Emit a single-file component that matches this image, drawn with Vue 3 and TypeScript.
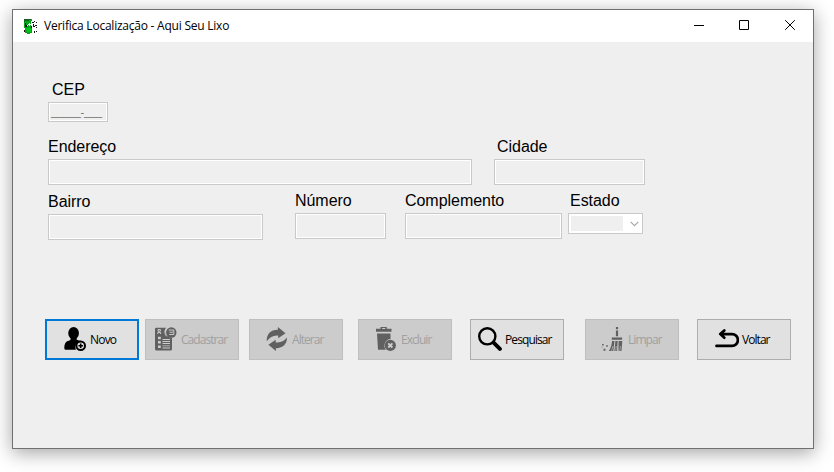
<script setup lang="ts">
import { ref } from 'vue'

interface Action {
  id: string
  label: string
  disabled?: boolean
}

const actions: Action[] = [
  { id: 'novo', label: 'Novo' },
  { id: 'cadastrar', label: 'Cadastrar', disabled: true },
  { id: 'alterar', label: 'Alterar', disabled: true },
  { id: 'excluir', label: 'Excluir', disabled: true },
  { id: 'pesquisar', label: 'Pesquisar' },
  { id: 'limpar', label: 'Limpar', disabled: true },
  { id: 'voltar', label: 'Voltar' },
]

const focused = ref('novo')
</script>

<template>
  <main class="desktop">
    <section class="window">
      <header class="titlebar">
        <svg class="app-icon" viewBox="0 0 14 15" shape-rendering="crispEdges">
          <path d="M0 0h8v2h-1v6h1v6H6v1H3v-1H1V9H0z" fill="#08a51c" />
          <path d="M0 0h7v1H5v1H1v1H0z" fill="#12631b" />
          <path d="M2 9h5v4H3z" fill="#05c61a" />
          <path d="M1 4h1v2h1v2H1zM8 3h2v1H8zM10 2h1v1h-1zM12 3h1v1h-1zM9 5h1v2h1v1H9zM11 6h2v1h-2zM12 8h1v1h-1zM7 7h1v2H7zM10 12h1v2h-1zM12 12h1v1h-1zM0 11h1v2H0z" fill="#111" />
          <path d="M3 6h1v1H3zM4 5h1v1H4zM5 4h1v3H5zM6 5h1v1H6z" fill="#d9f3dc" />
        </svg>
        <h1 class="title">Verifica Localização - Aqui Seu Lixo</h1>
        <div class="controls">
          <svg viewBox="0 0 46 32"><path d="M21 15.5h10" /></svg>
          <svg viewBox="0 0 46 32"><path d="M20.5 10.5h9v9h-9z" /></svg>
          <svg viewBox="0 0 46 32"><path d="M20.2 10.2l9.6 9.6M29.8 10.2l-9.6 9.6" /></svg>
        </div>
      </header>

      <form class="form" @submit.prevent>
        <div class="row row-cep">
          <label class="field cep"><span>CEP</span><span class="box mask">_____-___</span></label>
        </div>
        <div class="row row-street">
          <label class="field endereco"><span>Endereço</span><span class="box"></span></label>
          <label class="field cidade"><span>Cidade</span><span class="box"></span></label>
        </div>
        <div class="row row-details">
          <label class="field bairro"><span>Bairro</span><span class="box"></span></label>
          <label class="field numero"><span>Número</span><span class="box"></span></label>
          <label class="field complemento"><span>Complemento</span><span class="box"></span></label>
          <label class="field estado">
            <span>Estado</span>
            <span class="box select">
              <span class="value"></span>
              <svg viewBox="0 0 9 6"><path d="M.7.8l3.8 3.8L8.3.8" /></svg>
            </span>
          </label>
        </div>

        <div class="actions">
          <button
            v-for="action in actions"
            :key="action.id"
            type="button"
            class="action"
            :class="[action.id, { focused: focused === action.id }]"
            :disabled="action.disabled"
          >
            <svg class="icon" viewBox="0 0 24 24">
              <template v-if="action.id === 'novo'">
                <ellipse cx="9.6" cy="6.2" rx="5.3" ry="6.2" />
                <path d="M6.5 10.5h6.2v2.2l4 1.400a6 6 0 0 0-4.800 8.600H1.800Q.3 22.700.3 21.200C.4 16.500 1.500 14.700 4 13.900l2.500-1z" />
                <circle cx="16.700" cy="18.700" r="4.300" fill="none" stroke="currentColor" stroke-width="2" />
                <path d="M15.900 16.400h1.600v1.500H19v1.600h-1.500V21h-1.600v-1.500h-1.500v-1.600h1.500z" />
              </template>
              <template v-else-if="action.id === 'cadastrar'">
                <path fill-rule="evenodd" d="M2 .8h10.200a6.200 6.200 0 0 0 5.800 9.700V22a1.500 1.500 0 0 1-1.500 1.500H2.500A1.500 1.500 0 0 1 1 22V1.800a1 1 0 0 1 1-1zM4 9.800v2.400h2.800V9.800zM4 14v2.500h2.800V14zM4 18.400v2.500h2.800v-2.500zM8.500 12v.9h7.500V12zM8.500 14v.9h7.500V14zM8.500 16.100v.9h7.500v-.9zM8.500 18.400v.9h7.500v-.9zM8.500 20.600v.9h7.500v-.9z" />
                <path d="M3.800 7V5.500h2.800V7M4 2.600h2.400v1.600H4z" fill="none" stroke="#ccc" stroke-width="1" />
                <path d="M12.300 1.200q-3 4 .2 8" fill="none" stroke="#ccc" stroke-width="1" />
                <circle cx="17.300" cy="5.500" r="5.200" />
                <path d="M14.800 3h5v4.500h-4.500M15.500 5.200h3.500" fill="none" stroke="#ccc" stroke-width="1" />
              </template>
              <template v-else-if="action.id === 'alterar'">
                <path d="M1.800 14.200C1.300 7 6 2.600 12.900 2.800V0l7.600 6.300-7.300 4.900V8.600C8.300 8.100 5 10.200 1.800 14.200z" />
                <path d="M21.900 10.600C22.400 17 17.500 21.400 10.900 21.200V24l-7.500-6.300 7.300-4.900v2.600c4.900.5 8.200-.9 11.200-4.800z" />
              </template>
              <template v-else-if="action.id === 'excluir'">
                <path fill-rule="evenodd" d="M6.500 1.800V0h6.300v1.800h4.700v3H2v-3zM8.200 1.100v.8h3v-.8z" />
                <path d="M3 6.500h13.500v5.600a6.600 6.600 0 0 0-4.700 10.600H4z" />
                <circle cx="16.300" cy="18.400" r="5.600" />
                <path d="M14.200 16.300l4.200 4.200M18.400 16.300l-4.200 4.200" stroke="#ccc" stroke-width="1.900" />
              </template>
              <template v-else-if="action.id === 'pesquisar'">
                <circle cx="9.300" cy="9.300" r="8.100" fill="none" stroke="currentColor" stroke-width="2.400" />
                <path d="M15.600 15.600l6.300 6.300" stroke="currentColor" stroke-width="3.900" stroke-linecap="round" />
              </template>
              <template v-else-if="action.id === 'limpar'">
                <path d="M14.900 0h2.200v2.300h-2.200zM14.900 3.500h2.200v5.800h-2.200zM10.800 10.500h10.300v2.300H10.800zM11 13.900h2.500L12.300 24H7.900c1.900-3.200 2.900-6.400 3.100-10.100zM14.400 13.900h2.300l-.6 10.100h-2.700zM17.600 13.900h3.700L20.500 24h-3zM1.100 17h1.600v1.600H1.100zM5.200 18.200h1.600v1.600H5.200zM2.500 21.800h1.900v1.900H2.500zM.5 19.700h.8v.8H.5z" />
                <path d="M10.500 24l1.500-5M18.900 24l.4-5M14.800 24l.4-5" stroke="#ccc" stroke-width=".6" />
              </template>
              <template v-else>
                <path d="M9.300 3.500L5.300 7.100l4 3.600M5.500 7.100H17a5.900 5.900 0 0 1 0 11.800H1.500" fill="none" stroke="currentColor" stroke-width="2.700" stroke-linecap="round" stroke-linejoin="round" />
              </template>
            </svg>
            <span class="caption">{{ action.label }}</span>
          </button>
        </div>
      </form>
    </section>
  </main>
</template>

<style>
body {
  background: #fff;
  overflow: hidden;
}
</style>

<style scoped>
.desktop {
  box-sizing: border-box;
  width: 834px;
  height: 472px;
  padding: 9px 20px 23px 12px;
}
.window {
  box-sizing: border-box;
  width: 802px;
  height: 440px;
  border: 1px solid #707070;
  background: #efefef;
  box-shadow: 0 4px 18px rgba(0, 0, 0, 0.36);
}
.titlebar {
  display: flex;
  align-items: center;
  height: 32px;
  padding-left: 11px;
  background: #fff;
}
.app-icon {
  width: 14px;
  height: 15px;
  margin-right: 6px;
}
.title {
  margin: 0;
  font: 400 12px/16px 'Open Sans', 'Noto Sans', sans-serif;
  letter-spacing: -0.23px;
  white-space: nowrap;
  color: #000;
}
.controls {
  display: flex;
  margin-left: auto;
  padding-right: 2px;
}
.controls svg {
  width: 46px;
  height: 32px;
  fill: none;
  stroke: #000;
}
.form {
  padding-left: 32px;
  font: 16px/18px 'Liberation Sans', Arial, sans-serif;
  letter-spacing: -0.04px;
  color: #000;
}
.row {
  display: flex;
  align-items: flex-start;
  padding-left: 3px;
}
.row-cep {
  padding-top: 39px;
}
.row-street {
  padding-top: 16px;
}
.row-details {
  padding-top: 7px;
}
.field {
  display: flex;
  flex-direction: column;
  gap: 3px;
}
.box {
  box-sizing: border-box;
  height: 26px;
  border: 1px solid #c9c9c9;
  box-shadow: inset 0 0 0 1px #fff;
}
.cep {
  width: 60px;
}
.cep > span:first-child {
  padding-left: 4px;
}
.mask {
  height: 20px;
  padding-left: 2px;
  font-size: 11px;
  line-height: 18px;
  letter-spacing: -0.2px;
  color: #6d6d6d;
}
.endereco {
  width: 424px;
}
.cidade {
  width: 151px;
  margin-left: 22px;
}
.cidade > span:first-child {
  padding-left: 3px;
}
.bairro {
  width: 215px;
  padding-top: 1px;
}
.numero {
  width: 91px;
  margin-left: 32px;
}
.complemento {
  width: 157px;
  margin-left: 19px;
}
.estado {
  width: 75px;
  margin-left: 6px;
}
.estado > span:first-child {
  padding-left: 2px;
}
.select {
  display: flex;
  align-items: center;
  height: 21px;
  padding: 0 3px 0 2px;
  background: #fff;
}
.value {
  width: 52px;
  height: 15px;
  background: #efefef;
}
.select svg {
  width: 9px;
  height: 6px;
  margin-left: auto;
  fill: none;
  stroke: #a8a8a8;
  stroke-width: 1.2;
}
.actions {
  display: flex;
  padding-top: 79px;
}
.action {
  display: flex;
  align-items: center;
  gap: 3px;
  box-sizing: border-box;
  width: 94px;
  height: 41px;
  margin: 0;
  padding: 0 0 0 18px;
  border: 1px solid #adadad;
  background: #e1e1e1;
  color: #000;
}
.action.focused {
  gap: 2px;
  padding-left: 17px;
  border: 2px solid #0078d7;
}
.action:disabled {
  border-color: #bfbfbf;
  background: #ccc;
  color: #a0a0a0;
}
.icon {
  flex: none;
  width: 24px;
  height: 24px;
  margin-top: -1px;
  color: #000;
  fill: currentColor;
}
.action:disabled .icon {
  color: #606060;
}
.caption {
  font: 400 12px/16px 'Open Sans', 'Noto Sans', sans-serif;
  letter-spacing: -0.95px;
  white-space: nowrap;
}
.pesquisar .caption {
  letter-spacing: -0.9px;
}
.novo .caption {
  letter-spacing: -0.8px;
}
.cadastrar {
  margin-left: 6px;
  padding-left: 8px;
}
.alterar {
  margin-left: 10px;
  padding-left: 15px;
}
.excluir {
  margin-left: 15px;
  padding-left: 15px;
}
.pesquisar {
  margin-left: 18px;
  padding-left: 7px;
}
.limpar {
  margin-left: 21px;
  padding-left: 15px;
}
.voltar {
  margin-left: 18px;
  padding-left: 17px;
}
</style>
